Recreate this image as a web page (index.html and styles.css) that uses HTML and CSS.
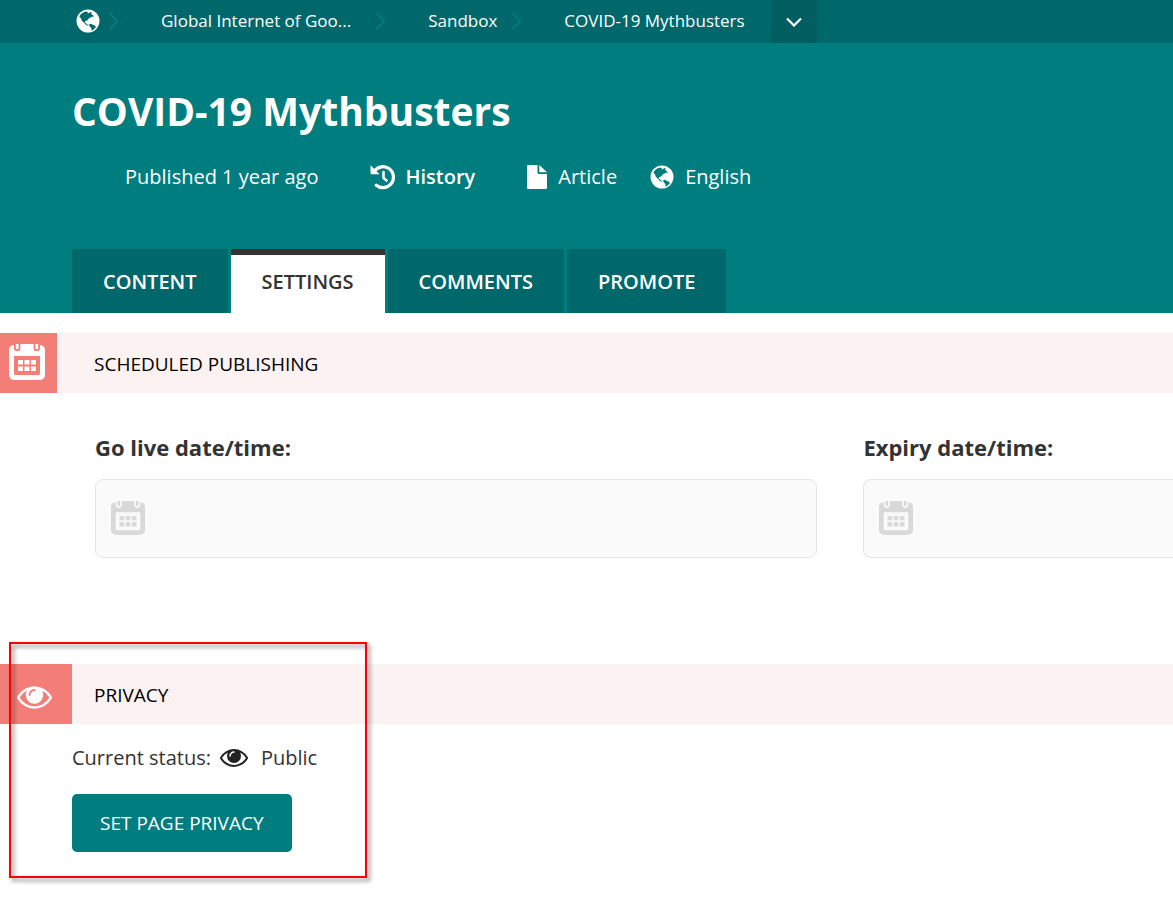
FILE: index.html
```html
<!DOCTYPE html>
<html lang="en">
<head>
<meta charset="utf-8">
<meta name="viewport" content="width=device-width, initial-scale=1">
<title>COVID-19 Mythbusters</title>
<link rel="stylesheet" href="styles.css">
</head>
<body>
<svg class="sprite" aria-hidden="true">
  <symbol id="globe" viewBox="0 0 24 24">
    <path fill="currentColor" fill-rule="evenodd" d="M12 .5a11.500 11.500 0 1 0 0 23a11.500 11.500 0 0 0 0-23zM9.800 2.600l2.200.6-.6 1.300 1.800-.4 1-1.200 1.500.7-.5 1.300 1.900 1.300.7 2-1.800-.6-1.200.9-1.700.6-1 1.400-1.500 1.300-1.500.2-.4 1.400 1.100.5 1 1.500 1.800.4-.4 1-2.200-.9-2-2.200-2.300-2.200L4.900 9 3.300 7.900l1.300-2.400 2.600-1.900zM13.200 15.300l2-.5 1.800 1.200 1.800.5 1.200 1.600-2.100 2.100-2.400 1.500-.1-2.600-1.800-1.800z"/>
  </symbol>
  <symbol id="chevron" viewBox="0 0 12 18">
    <path fill="none" stroke="currentColor" stroke-width="2" d="M1.500 1l8 8-8 8"/>
  </symbol>
  <symbol id="calendar" viewBox="0 0 36 36">
    <path fill="currentColor" fill-rule="evenodd" d="M5 1Q0 1.500 0 6V30q0 6 6 6H30q6 0 6-6V6q0-4.500-5-5V4a3.200 3.200 0 0 1-6.400 0V0H11.400V4A3.200 3.200 0 0 1 5 4zM5 12H31V29.500Q31 31 29.500 31H6.500Q5 31 5 29.500z"/>
    <path fill="currentColor" d="M6.800 0h2.800v4a1.400 1.400 0 0 1-2.800 0zM26.400 0h2.800v4a1.400 1.400 0 0 1-2.800 0zM9 16h5v4.500H9zM15.500 16h5v4.500h-5zM22 16h5v4.500h-5zM9 22.500h5v4.500H9zM15.500 22.500h5v4.500h-5zM22 22.500h5v4.500h-5z"/>
  </symbol>
  <symbol id="eye" viewBox="0 384 1792 1152">
    <path fill="currentColor" d="M1664 960q-152-236-381-353 61 104 61 225 0 185-131.500 316.500t-316.500 131.500-316.500-131.500-131.500-316.500q0-121 61-225-229 117-381 353 133 205 333.500 326.500t434.500 121.500 434.500-121.500 333.500-326.500zm-720-384q0-20-14-34t-34-14q-125 0-214.500 89.500t-89.500 214.500q0 20 14 34t34 14 34-14 14-34q0-86 61-147t147-61q20 0 34-14t14-34zm848 384q0 34-20 69-140 230-376.500 368.500t-499.500 138.500-499.500-139-376.500-368q-20-35-20-69t20-69q140-229 376.500-368t499.500-139 499.500 139 376.500 368q20 35 20 69z"/>
  </symbol>
</svg>

<header class="header">
  <nav class="breadcrumb" aria-label="Breadcrumb">
    <ol class="crumbs">
      <li class="crumb crumb-root"><a href="#" aria-label="Root"><svg class="icon-globe"><use href="#globe"/></svg></a><svg class="icon-chevron"><use href="#chevron"/></svg></li>
      <li class="crumb crumb-wide"><a href="#">Global Internet of Goo...</a><svg class="icon-chevron"><use href="#chevron"/></svg></li>
      <li class="crumb"><a href="#">Sandbox</a><svg class="icon-chevron"><use href="#chevron"/></svg></li>
      <li class="crumb"><a href="#">COVID-19 Mythbusters</a></li>
    </ol>
    <button class="crumb-toggle" type="button" aria-label="More actions">
      <svg class="icon-down" viewBox="0 0 16 10"><path fill="none" stroke="currentColor" stroke-width="2.200" d="M1 1.500l7 7 7-7"/></svg>
    </button>
  </nav>

  <div class="heading">
    <h1 class="title">COVID-19 Mythbusters</h1>
    <ul class="meta">
      <li class="meta-item meta-status">Published 1 year ago</li>
      <li class="meta-item meta-history"><a class="history" href="#"><svg class="icon-history" viewBox="0 0 26 26"><path fill="none" stroke="currentColor" stroke-width="3.200" stroke-linecap="round" d="M4.500 7A10.500 10.500 0 1 1 6.200 21.200"/><path fill="currentColor" d="M.5 1.200L9.600 10.200H1.500Q.5 10.200.5 9.200z"/><path fill="none" stroke="currentColor" stroke-width="2.600" stroke-linecap="round" stroke-linejoin="round" d="M13.500 8v6l3 2.500"/></svg>History</a></li>
      <li class="meta-item meta-type"><svg class="icon-file" viewBox="0 0 20 24"><path fill="currentColor" d="M1 0h9.500v7.500q0 1.500 1.500 1.500h8v14q0 1-1 1H1q-1 0-1-1V1q0-1 1-1zM12.300 0l7.700 7.300h-7.700z"/></svg>Article</li>
      <li class="meta-item"><svg class="icon-globe"><use href="#globe"/></svg>English</li>
    </ul>
  </div>

  <nav class="tabs" aria-label="Page sections">
    <a class="tab" href="#content">Content</a>
    <a class="tab tab-active" href="#settings" aria-current="page">Settings</a>
    <a class="tab" href="#comments">Comments</a>
    <a class="tab" href="#promote">Promote</a>
  </nav>
</header>

<main class="main" id="settings">
  <section class="schedule">
    <h2 class="bar"><span class="bar-icon"><svg class="icon-calendar"><use href="#calendar"/></svg></span><span class="bar-text">Scheduled publishing</span></h2>
    <div class="fields">
      <div class="field">
        <label class="label" for="go-live">Go live date/time:</label>
        <div class="control"><svg class="icon-date"><use href="#calendar"/></svg><input class="input" id="go-live" type="text"></div>
      </div>
      <div class="field">
        <label class="label" for="expiry">Expiry date/time:</label>
        <div class="control control-open"><svg class="icon-date"><use href="#calendar"/></svg><input class="input" id="expiry" type="text"></div>
      </div>
    </div>
  </section>

  <section class="privacy">
    <div class="highlight"></div>
    <h2 class="bar"><span class="bar-icon bar-icon-wide"><svg class="icon-eye"><use href="#eye"/></svg></span><span class="bar-text">Privacy</span></h2>
    <div class="privacy-body">
      <p class="status">Current status: <svg class="icon-eye-small"><use href="#eye"/></svg><span class="status-value">Public</span></p>
      <button class="button" type="button">Set page privacy</button>
    </div>
  </section>
</main>
</body>
</html>
```

FILE: styles.css
```css
* {
  box-sizing: border-box;
}

body {
  margin: 0;
  background: #fff;
  color: #333;
  font-family: "Open Sans", "Noto Sans", sans-serif;
  font-size: 20px;
  font-weight: 400;
  line-height: 28px;
}

a {
  color: inherit;
  text-decoration: none;
}

svg {
  display: block;
  flex: none;
}

.sprite {
  position: absolute;
  width: 0;
  height: 0;
}

.header {
  background: #007d7e;
  color: #fff;
}

.breadcrumb {
  display: flex;
  height: 43px;
  padding-left: 76px;
  background: #00676a;
  font-size: 17px;
}

.crumbs {
  display: flex;
  align-items: center;
  gap: 41px;
  margin: 0;
  padding: 0 26px 2px 0;
  list-style: none;
}

.crumb {
  display: flex;
  align-items: center;
  gap: 14px;
  white-space: nowrap;
}

.crumb-root {
  gap: 8px;
}

.crumb-wide {
  gap: 24px;
}

.icon-chevron {
  width: 12px;
  height: 18px;
  color: #007d7e;
}

.icon-globe {
  width: 24px;
  height: 24px;
}

.crumb-toggle {
  display: flex;
  align-items: center;
  justify-content: center;
  width: 46px;
  padding: 0;
  border: 0;
  border-radius: 0 0 3px 3px;
  background: #005d60;
  color: #fff;
}

.icon-down {
  width: 16px;
  height: 10px;
}

.heading {
  padding: 40px 72px 58px;
}

.title {
  margin: 0;
  font-size: 39px;
  font-weight: 700;
  line-height: 56px;
}

.meta {
  display: flex;
  align-items: center;
  margin: 0;
  padding: 24px 0 0 53px;
  list-style: none;
}

.meta-item {
  display: flex;
  align-items: center;
  gap: 11px;
  white-space: nowrap;
}

.meta-status,
.meta-history {
  margin-right: 52px;
}

.meta-type {
  margin-right: 33px;
}

.history {
  display: flex;
  align-items: center;
  gap: 9px;
  font-weight: 600;
}

.icon-history {
  width: 26px;
  height: 26px;
}

.icon-file {
  width: 20px;
  height: 24px;
}

.tabs {
  display: flex;
  gap: 3px;
  padding-left: 72px;
}

.tab {
  height: 64px;
  padding: 13px 31px 0;
  border-top: 6px solid #00676a;
  background: #00676a;
  font-weight: 600;
  text-transform: uppercase;
}

.tab-active {
  border-color: #333;
  background: #fff;
  color: #333;
}

.main {
  overflow: hidden;
}

.schedule {
  padding-top: 20px;
}

.bar {
  display: flex;
  align-items: stretch;
  height: 60px;
  margin: 0;
  background: #fcf2f1;
  color: #000;
  font-size: 19px;
  font-weight: 400;
  text-transform: uppercase;
}

.bar-icon {
  display: flex;
  align-items: center;
  width: 57px;
  padding: 0 0 2px 9px;
  background: #f37e77;
  color: #fff;
}

.bar-icon-wide {
  width: 72px;
  padding: 7px 0 0 17px;
}

.bar-text {
  align-self: center;
  padding: 2px 0 0 37px;
}

.bar-icon-wide + .bar-text {
  padding-left: 22px;
}

.icon-calendar {
  width: 36px;
  height: 36px;
}

.icon-eye {
  width: 35px;
  height: 23px;
}

.fields {
  display: grid;
  grid-template-columns: minmax(0, 7fr) minmax(0, 3fr);
  gap: 46px;
  padding: 40px 0 0 95px;
}

.label {
  display: block;
  margin-bottom: 18px;
  font-size: 22px;
  font-weight: 700;
}

.control {
  display: flex;
  align-items: center;
  gap: 16px;
  height: 79px;
  padding: 0 16px 2px 15px;
  border: 1px solid #e6e6e6;
  border-radius: 8px;
  background: #fafafa;
}

.control-open {
  border-right: 0;
  border-radius: 8px 0 0 8px;
}

.icon-date {
  width: 34px;
  height: 34px;
  color: #d9d9d9;
}

.input {
  flex: 1;
  min-width: 0;
  height: 48px;
  border: 0;
  outline: 0;
  background: transparent;
  font: inherit;
}

.privacy {
  position: relative;
  margin: 84px 0 30px;
  padding: 22px 0 26px;
}

.highlight {
  position: absolute;
  top: 0;
  bottom: 0;
  left: 9px;
  width: 358px;
  border: 2px solid #f00;
  filter: drop-shadow(3px 3px 2px rgba(0, 0, 0, 0.5));
  pointer-events: none;
}

.privacy-body {
  padding: 20px 0 0 72px;
}

.status {
  display: flex;
  align-items: center;
  gap: 9px;
  margin: 0 0 22px;
}

.status-value {
  padding-left: 4px;
}

.icon-eye-small {
  width: 28px;
  height: 18px;
  color: #222;
}

.button {
  height: 58px;
  padding: 0 28px;
  border: 0;
  border-radius: 5px;
  background: #007d7e;
  color: #fff;
  font: inherit;
  font-size: 19px;
  text-transform: uppercase;
}
```
